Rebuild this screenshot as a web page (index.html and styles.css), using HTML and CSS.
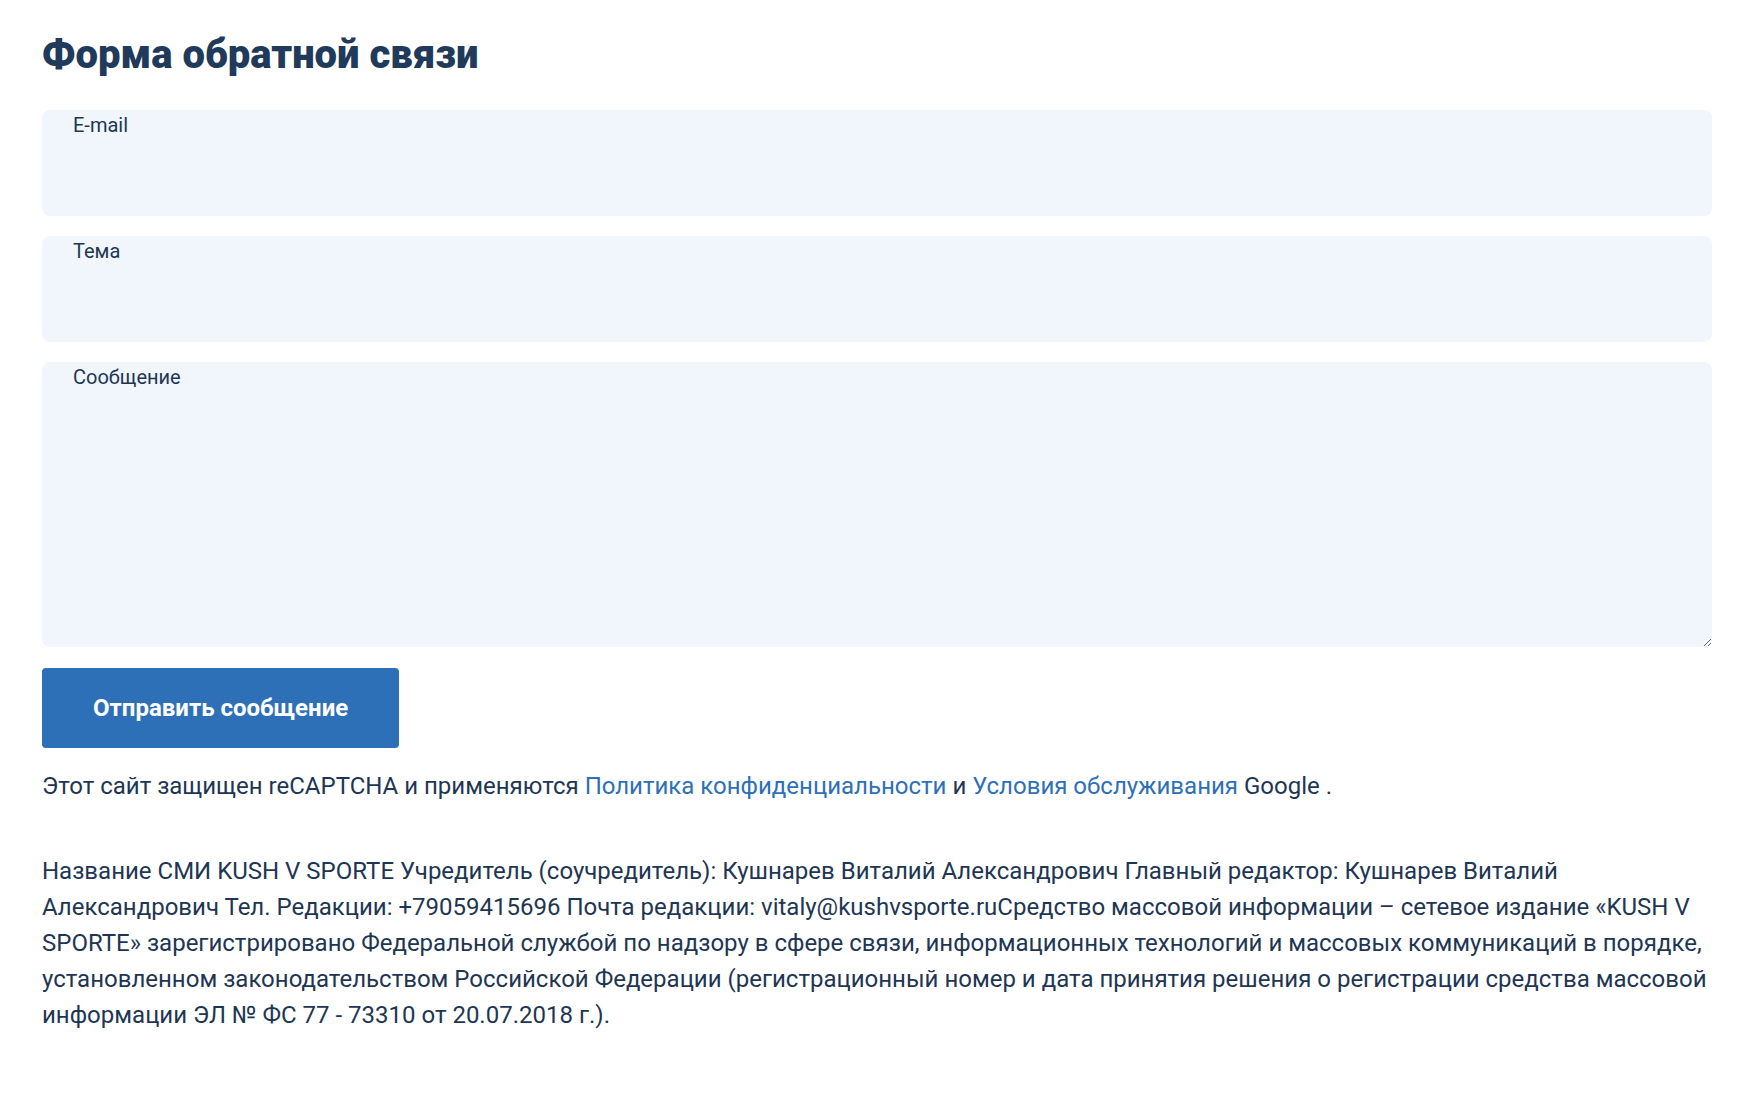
FILE: index.html
```html
<!DOCTYPE html>
<html lang="ru">
<head>
<meta charset="utf-8">
<title>Форма обратной связи</title>
<link rel="stylesheet" href="styles.css">
</head>
<body>
<main class="page">
  <h1 class="title">Форма обратной связи</h1>
  <form class="form">
    <div class="field">
      <label class="field-label" for="email">E-mail</label>
      <input class="field-input" id="email" type="email">
    </div>
    <div class="field">
      <label class="field-label" for="subject">Тема</label>
      <input class="field-input" id="subject" type="text">
    </div>
    <div class="field">
      <label class="field-label" for="message">Сообщение</label>
      <textarea class="field-input field-textarea" id="message"></textarea>
    </div>
    <button class="submit" type="button">Отправить сообщение</button>
  </form>
  <p class="recaptcha">Этот сайт защищен reCAPTCHA и применяются <a href="#">Политика конфиденциальности</a> и <a href="#">Условия обслуживания</a> Google .</p>
  <p class="info">Название СМИ KUSH V SPORTE Учредитель (соучредитель): Кушнарев Виталий Александрович Главный редактор: Кушнарев Виталий Александрович Тел. Редакции: +79059415696 Почта редакции: vitaly@kushvsporte.ruСредство массовой информации – сетевое издание «KUSH V SPORTE» зарегистрировано Федеральной службой по надзору в сфере связи, информационных технологий и массовых коммуникаций в порядке, установленном законодательством Российской Федерации (регистрационный номер и дата принятия решения о регистрации средства массовой информации ЭЛ № ФС 77 - 73310 от 20.07.2018 г.).</p>
</main>
</body>
</html>
```

FILE: styles.css
```css
html, body {
  margin: 0;
  padding: 0;
  background: #ffffff;
}

body {
  font-family: Roboto, "Noto Sans", "Liberation Sans", sans-serif;
  color: #1e3654;
}

.page {
  padding: 31px 26px 40px 42px;
}

.title {
  margin: 0;
  font-size: 40px;
  line-height: 47px;
  font-weight: 900;
  color: #1f3a5a;
}

.form {
  margin-top: 32px;
  display: flex;
  flex-direction: column;
  gap: 20px;
}

.field {
  position: relative;
  display: flex;
}

.field-label {
  position: absolute;
  left: 31px;
  top: 3px;
  font-size: 20px;
  line-height: 24px;
  color: #1e3654;
}

.field-input {
  box-sizing: border-box;
  width: 100%;
  height: 106px;
  margin: 0;
  border: 0;
  border-radius: 8px;
  background: #f1f6fd;
  padding: 36px 31px 10px;
  font-family: inherit;
  font-size: 20px;
  color: #1e3654;
  outline: none;
}

.field-textarea {
  height: 285px;
  resize: vertical;
  display: block;
}

.submit {
  align-self: flex-start;
  margin-top: 1px;
  height: 80px;
  padding: 0 51px;
  border: 0;
  border-radius: 4px;
  background: #2d70b8;
  color: #ffffff;
  font-family: inherit;
  font-size: 24px;
  font-weight: 700;
  cursor: pointer;
}

.recaptcha {
  margin: 20px 0 0;
  font-size: 24px;
  line-height: 36px;
}

.recaptcha a,
.info a {
  color: #2d70b8;
  text-decoration: none;
}

.info {
  margin: 49px 0 0;
  font-size: 24px;
  line-height: 36px;
}
```
